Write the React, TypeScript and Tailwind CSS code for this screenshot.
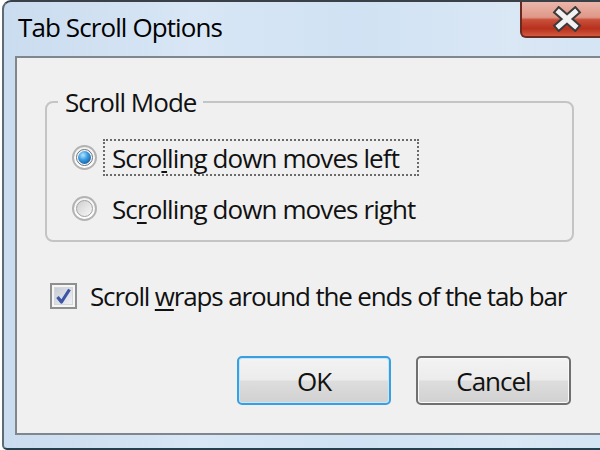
import React from "react";

const font = "font-['Open_Sans','Noto_Sans',sans-serif]";

function Radio({ checked }: { checked: boolean }) {
  return (
    <div className="w-[25px] h-[25px] shrink-0 rounded-full border-2 border-[#b3b3b3] bg-[linear-gradient(to_bottom,#f2f2f2,#ffffff)] flex items-center justify-center">
      <div
        className={
          checked
            ? "w-[17px] h-[17px] rounded-full border border-[#6f6f6f] bg-white flex items-center justify-center"
            : "w-[17px] h-[17px] rounded-full border border-[#a0a0a0] bg-[linear-gradient(135deg,#cfcfcf,#f8f8f8)] flex items-center justify-center"
        }
      >
        {checked && (
          <div className="w-[13px] h-[13px] rounded-full bg-[radial-gradient(circle_at_38%_32%,#b5e6ff_0%,#3a9be0_40%,#11589a_85%,#0b3f70_100%)]" />
        )}
      </div>
    </div>
  );
}

function U({ children }: { children: React.ReactNode }) {
  return (
    <span className="underline decoration-[2px] underline-offset-[3px]">
      {children}
    </span>
  );
}

export default function App() {
  return (
    <div className="w-[600px] h-[450px] overflow-hidden bg-white">
      <div className="ml-[2px] w-[640px] h-[450px] flex flex-col rounded-tl-[9px] rounded-bl-[5px] border-2 border-[#5f6a74] border-t-[#3a4047] border-b-[#24414f] bg-[linear-gradient(to_right,#cadcef,#d8e6f5_30%,#d0e2f3_55%,#dae7f5_80%,#d2e3f3)]">
        {/* Title bar */}
        <div className="h-[54px] shrink-0 flex items-start">
          <div
            className={`pl-[14px] pt-[10px] text-[26px] leading-[30px] tracking-[-0.9px] text-black ${font}`}
          >
            Tab Scroll Options
          </div>
          <div className="ml-auto mr-[20px] w-[100px] h-[36px] rounded-bl-[6px] rounded-br-[6px] border-2 border-t-0 border-[#6a2a20] bg-[linear-gradient(to_bottom,#eab6aa_0%,#df9888_45%,#c9503b_52%,#b7311d_78%,#d35a3f_100%)] flex items-center pl-[30px]">
            <svg width="30" height="26" viewBox="0 0 30 26">
              <path
                d="M7 6 L23 20 M23 6 L7 20"
                stroke="#3b3b3b"
                strokeWidth="9"
                strokeLinecap="square"
                fill="none"
              />
              <path
                d="M7 6 L23 20 M23 6 L7 20"
                stroke="#f2f2f2"
                strokeWidth="5"
                strokeLinecap="square"
                fill="none"
              />
            </svg>
          </div>
        </div>

        {/* Client area */}
        <div
          className={`flex-1 mx-[11px] mb-[13px] border-2 border-[#7f868d] bg-[#f0f0f0] flex flex-col pl-[28px] pt-[29px] text-[26px] leading-[30px] tracking-[-1px] text-[#111] ${font}`}
        >
          <fieldset className="w-[529px] border-2 border-[#c4c4c4] rounded-[8px]">
            <legend className="ml-[11px] px-[7px] leading-[30px]">
              Scroll Mode
            </legend>
            <div className="flex flex-col pl-[25px] pt-[22px] pb-[13px] gap-[14px]">
              <div className="flex items-center h-[37px]">
                <Radio checked />
                <div className="ml-[6px] w-[316px] h-[37px] border-2 border-dotted border-[#6a6a6a] pl-[7px] flex items-center tracking-[-0.9px]">
                  <span>
                    Scro<U>l</U>ling down moves left
                  </span>
                </div>
              </div>
              <div className="flex items-center h-[37px]">
                <Radio checked={false} />
                <div className="ml-[6px] h-[37px] border-2 border-transparent pl-[7px] flex items-center tracking-[-0.9px]">
                  <span>
                    Sc<U>r</U>olling down moves right
                  </span>
                </div>
              </div>
            </div>
          </fieldset>

          <div className="mt-[39px] h-[30px] flex items-center">
            <div className="ml-[5px] w-[27px] h-[26px] border-2 border-[#8e8f8f] bg-[#f6f6f6] p-[2px] flex">
              <div className="flex-1 border border-[#d4d6da] bg-[linear-gradient(135deg,#c6ccd6,#eef0f3)] flex items-center justify-center">
                <svg width="17" height="17" viewBox="0 0 17 17">
                  <path
                    d="M2.5 9 L6.5 14 L14.5 1.5"
                    stroke="#3d55a6"
                    strokeWidth="3.2"
                    strokeLinejoin="round"
                    fill="none"
                  />
                </svg>
              </div>
            </div>
            <span className="ml-[13px] tracking-[-1.15px]">
              Scroll <U>w</U>raps around the ends of the tab bar
            </span>
          </div>

          <div className="mt-[45px] ml-[192px] flex gap-[25px]">
            <button className="w-[154px] h-[49px] rounded-[5px] border-2 border-[#3a9fe0] shadow-[inset_0_0_0_1px_#c4e8fb] bg-[linear-gradient(to_bottom,#f3f3f3_0%,#ececec_48%,#dddddd_52%,#d1d1d1_100%)] flex items-center justify-center tracking-[-1px]">
              OK
            </button>
            <button className="w-[155px] h-[49px] rounded-[5px] border-2 border-[#707070] shadow-[inset_0_0_0_1px_#fafafa] bg-[linear-gradient(to_bottom,#f3f3f3_0%,#ececec_48%,#dddddd_52%,#d1d1d1_100%)] flex items-center justify-center tracking-[-1px]">
              Cancel
            </button>
          </div>
        </div>
      </div>
    </div>
  );
}
